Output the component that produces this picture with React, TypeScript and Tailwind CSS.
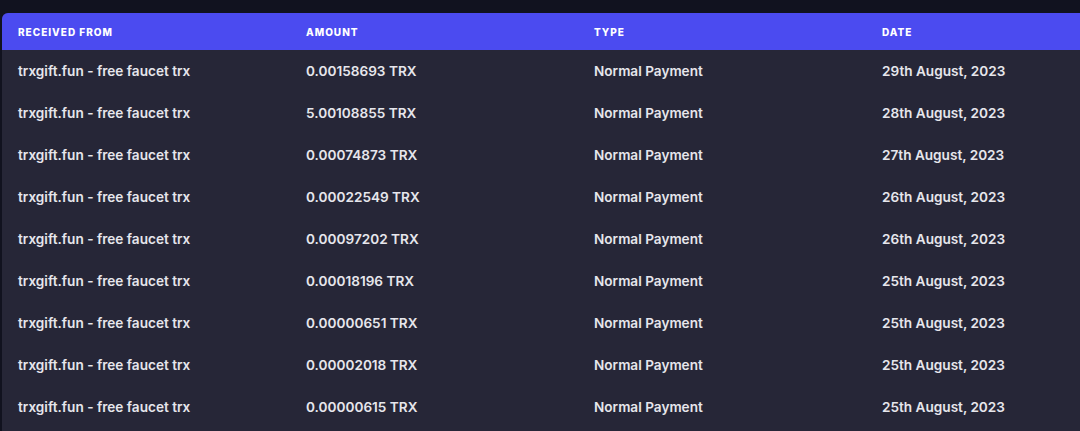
const rows = [
  { amount: "0.00158693 TRX", date: "29th August, 2023" },
  { amount: "5.00108855 TRX", date: "28th August, 2023" },
  { amount: "0.00074873 TRX", date: "27th August, 2023" },
  { amount: "0.00022549 TRX", date: "26th August, 2023" },
  { amount: "0.00097202 TRX", date: "26th August, 2023" },
  { amount: "0.00018196 TRX", date: "25th August, 2023" },
  { amount: "0.00000651 TRX", date: "25th August, 2023" },
  { amount: "0.00002018 TRX", date: "25th August, 2023" },
  { amount: "0.00000615 TRX", date: "25th August, 2023" },
]

export default function App() {
  return (
    <div className="h-[431px] w-[1080px] overflow-hidden bg-[#11121f] pt-[13px] pl-[2px] font-['Inter',sans-serif]">
      <div className="min-h-[440px] w-[1152px] overflow-hidden rounded-tl-md bg-[#262637]">
        <div className="grid h-[37px] grid-cols-4 items-center bg-[#4b4bf0] pt-[1px] text-[10px] font-extrabold uppercase tracking-[0.1em] text-white">
          <div className="pl-4">Received From</div>
          <div className="pl-4">Amount</div>
          <div className="pl-4">Type</div>
          <div className="pl-4">Date</div>
        </div>
        {rows.map((row, i) => (
          <div key={i} className="grid h-[42px] grid-cols-4 items-center pt-[1px] text-[13.6px] font-semibold text-[#e6e6ec]">
            <div className="pl-4">trxgift.fun - free faucet trx</div>
            <div className="pl-4">{row.amount}</div>
            <div className="pl-4">Normal Payment</div>
            <div className="pl-4">{row.date}</div>
          </div>
        ))}
      </div>
    </div>
  )
}
